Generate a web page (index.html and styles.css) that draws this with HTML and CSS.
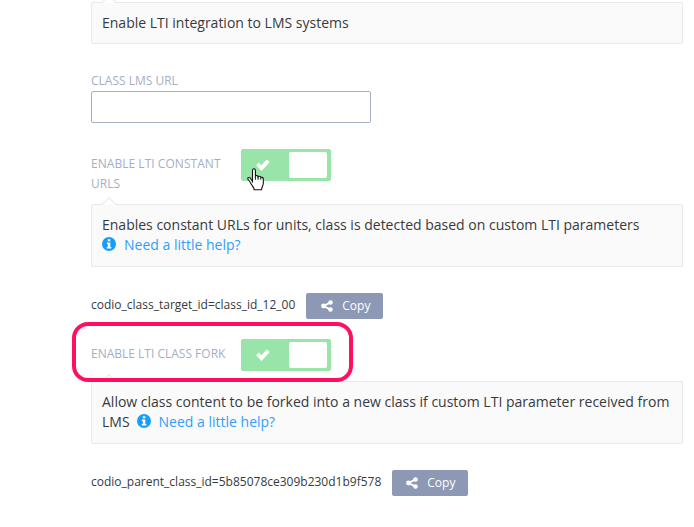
FILE: index.html
```html
<!DOCTYPE html>
<html lang="en">
<head>
<meta charset="utf-8">
<title>LTI settings</title>
<link rel="stylesheet" href="styles.css">
</head>
<body>
<svg class="defs" width="0" height="0" aria-hidden="true">
  <symbol id="check" viewBox="0 0 14 12"><path d="M0.2 6.2 2.9 3.4 5.4 6.2 10.8 0.4 13.8 3 5.5 12z"/></symbol>
  <symbol id="share" viewBox="0 0 12 12"><path d="M9.5 2.4 2.6 6l6.9 3.6" fill="none" stroke="currentColor" stroke-width="1.9"/><circle cx="9.5" cy="2.5" r="2.3"/><circle cx="2.5" cy="6" r="2.4"/><circle cx="9.5" cy="9.5" r="2.3"/></symbol>
  <symbol id="info" viewBox="0 0 14 14"><circle cx="7" cy="7" r="7"/><path d="M5.8 2.2h2.5v2.1H5.8zM4.9 5.5h3.4v4.4h1v1.5H4.8V9.9h1V7h-.9z" fill="#fff"/></symbol>
</svg>
<main class="settings">
  <div class="hint hint-single"><span>Enable LTI integration to LMS systems</span></div>

  <label class="label field-label" for="lms">CLASS LMS URL</label>
  <input class="field" id="lms" type="text">

  <div class="row row-constant">
    <div class="label row-label"><span class="label-constant">ENABLE LTI CONSTANT</span><br><span>URLS</span></div>
    <div class="toggle">
      <svg class="check"><use href="#check"/></svg><span class="knob"></span>
      <svg class="pointer" viewBox="0 0 17 23"><path d="M5.5 13.5V2.6C5.5.2 8.4.2 8.4 2.6v5.6c.3-1 2.6-.8 2.7.6.5-.9 2.6-.6 2.7.7.8-.6 2.5-.2 2.5 1.4v4.3c0 2.7-1.6 3.6-1.8 6.5H7.2c-.2-2.6-2.4-4.2-3.6-6.8-.8-1.8-2.5-3-2.8-4.1-.3-1.4 1.4-1.8 2.5-.8z" fill="#fff" stroke="#111" stroke-width="1.1"/><path d="M8.4 8v3.7M11.1 9v2.7M13.8 10v1.7" stroke="#111" fill="none"/></svg>
    </div>
  </div>
  <div class="hint"><span>Enables constant URLs for units, class is detected based on custom LTI parameters</span><br><svg class="info"><use href="#info"/></svg><a class="help">Need a little help?</a></div>

  <div class="param"><span>codio_class_target_id=class_id_12_00</span><button class="copy"><svg class="share"><use href="#share"/></svg><span>Copy</span></button></div>

  <div class="row row-fork">
    <div class="label row-label"><span>ENABLE LTI CLASS FORK</span></div>
    <div class="toggle"><svg class="check"><use href="#check"/></svg><span class="knob"></span></div>
    <div class="highlight"></div>
  </div>
  <div class="hint"><span>Allow class content to be forked into a new class if custom LTI parameter received from</span><br><span>LMS</span><svg class="info info-inline"><use href="#info"/></svg><a class="help">Need a little help?</a></div>

  <div class="param"><span>codio_parent_class_id=5b85078ce309b230d1b9f578</span><button class="copy copy-narrow"><svg class="share"><use href="#share"/></svg><span>Copy</span></button></div>
</main>
</body>
</html>
```
FILE: styles.css
```css
* { box-sizing: border-box; }
body {
  margin: 0;
  height: 527px;
  overflow: hidden;
  background: #fff;
  color: #363a40;
  font: 14px/20px "Open Sans", sans-serif;
}
.defs { display: block; height: 0; }
svg { fill: currentColor; flex: none; }
.settings { width: 683px; padding: 2px 0 0 91px; }
.hint {
  position: relative;
  height: 63px;
  padding: 10px;
  border: 1px solid #e8e9ef;
  border-radius: 2px;
  background: #fafafa;
  white-space: nowrap;
}
.hint-single { height: 42px; }
.hint::before {
  content: "";
  position: absolute;
  left: 12px;
  top: -6px;
  width: 9px;
  height: 9px;
  border: solid #e8e9ef;
  border-width: 1px 0 0 1px;
  background: linear-gradient(135deg, #fff 50%, transparent 50%);
  transform: rotate(45deg);
}
.label { color: #a5afc4; font-size: 12px; line-height: 20px; white-space: nowrap; }
.label-constant { letter-spacing: 0.04px; }
.field-label { display: block; margin-top: 27px; height: 20px; }
.field {
  display: block;
  width: 280px;
  height: 32px;
  border: 1px solid #a7afc5;
  border-radius: 2px;
  background: #fff;
  outline: 0;
}
.row { position: relative; display: flex; align-items: flex-start; }
.row-constant { margin-top: 26px; height: 55px; }
.row-fork { margin-top: 20px; height: 42px; }
.row-label { width: 150px; padding-top: 5px; }
.toggle {
  position: relative;
  display: flex;
  align-items: center;
  justify-content: space-between;
  width: 90px;
  height: 32px;
  padding: 3px 4px 3px 15px;
  border-radius: 2px;
  background: #99e5a9;
}
.check { width: 14px; height: 12px; color: #fff; }
.knob { width: 38px; height: 26px; border-radius: 2px; background: #fff; }
.pointer { position: absolute; left: 6px; top: 19px; width: 17px; height: 23px; }
.info { width: 14px; height: 14px; margin-right: 8px; color: #189dfc; vertical-align: -1px; }
.info-inline { margin-left: 7px; }
.help { color: #329dfa; }
.param { display: flex; align-items: center; gap: 11px; height: 26px; margin-top: 26px; font-size: 12px; }
.param > span { position: relative; top: -1px; white-space: nowrap; }
.copy {
  display: flex;
  align-items: center;
  gap: 9px;
  width: 77px;
  height: 26px;
  padding: 0 0 0 15px;
  border: 0;
  border-radius: 2px;
  background: #8d98b4;
  color: #fff;
  font: 12px/20px "Open Sans", sans-serif;
}
.copy-narrow { width: 76px; padding-left: 14px; }
.share { width: 12px; height: 12px; }
.highlight {
  position: absolute;
  z-index: 2;
  left: -19px;
  top: -17px;
  width: 281px;
  height: 60px;
  border: 4px solid #ff0f5f;
  border-radius: 16px;
}
```
